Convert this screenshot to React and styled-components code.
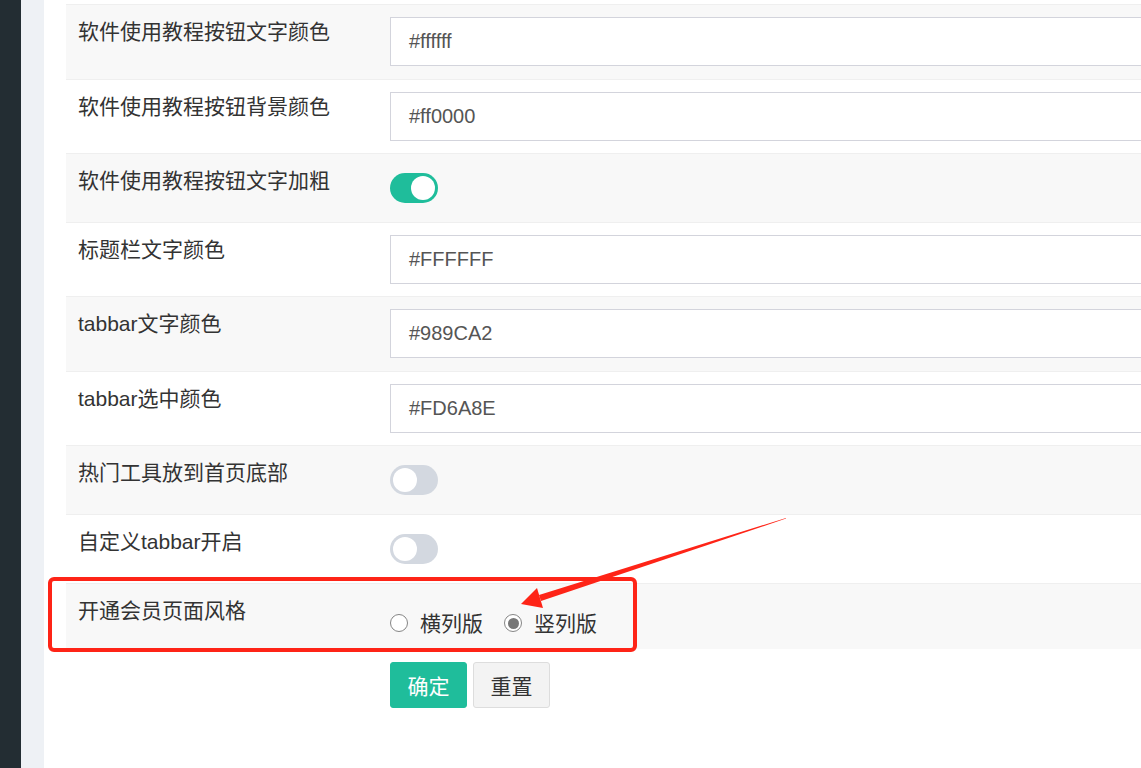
import React from "react";
import styled, { createGlobalStyle } from "styled-components";

const GlobalStyle = createGlobalStyle`
  html, body {
    margin: 0;
    padding: 0;
    overflow: hidden;
    background: #ffffff;
    font-family: "Liberation Sans", "Noto Sans CJK SC", sans-serif;
  }
`;

const Page = styled.div`
  display: flex;
  width: 1141px;
  height: 768px;
  overflow: hidden;
  position: relative;
`;

const Sidebar = styled.div`
  width: 21px;
  flex-shrink: 0;
  background: #232d33;
`;

const Gutter = styled.div`
  width: 23px;
  flex-shrink: 0;
  background: #eef1f5;
`;

const Main = styled.div`
  flex: 1;
  min-width: 0;
  padding: 4px 0 0 22px;
  background: #ffffff;
`;

const Form = styled.div`
  width: 1200px;
`;

// one settings row, striped
const Row = styled.div`
  display: flex;
  align-items: flex-start;
  box-sizing: border-box;
  height: ${(p) => p.$h}px;
  padding: 12px 0 0 12px;
  border-top: 1px solid #efefef;
  background: ${(p) => (p.$odd ? "#f8f8f8" : "#ffffff")};
`;

const Label = styled.div`
  width: 312px;
  flex-shrink: 0;
  font-size: 21px;
  line-height: 30px;
  color: #333333;
`;

const TextInput = styled.div`
  flex: 1;
  box-sizing: border-box;
  height: 49px;
  border: 1px solid #d3d4dc;
  background: #ffffff;
  padding: 0 18px;
  display: flex;
  align-items: center;
  font-size: 20px;
  color: #555555;
`;

const Switch = styled.div`
  position: relative;
  margin-top: 7px;
  width: 48px;
  height: 30px;
  border-radius: 15px;
  background: ${(p) => (p.$on ? "#1fbd9b" : "#d3d8e0")};
  &::after {
    content: "";
    position: absolute;
    top: 3px;
    left: ${(p) => (p.$on ? "21px" : "3px")};
    width: 24px;
    height: 24px;
    border-radius: 50%;
    background: #ffffff;
  }
`;

const RadioGroup = styled.div`
  display: flex;
  align-items: center;
  height: 30px;
  margin-top: 11px;
  font-size: 21px;
  color: #333333;
`;

const RadioItem = styled.label`
  display: flex;
  align-items: center;
  margin-right: 21px;
`;

const RadioDot = styled.span`
  box-sizing: border-box;
  width: 18px;
  height: 18px;
  border-radius: 50%;
  border: 1.5px solid #858585;
  background: #ffffff;
  margin-right: 12px;
  margin-top: 2px;
  display: flex;
  align-items: center;
  justify-content: center;
  &::after {
    content: "";
    width: 11px;
    height: 11px;
    border-radius: 50%;
    background: ${(p) => (p.$checked ? "#777777" : "transparent")};
  }
`;

const ButtonBar = styled.div`
  display: flex;
  gap: 6px;
  margin-top: 13px;
  padding-left: 324px;
`;

const Button = styled.div`
  box-sizing: border-box;
  width: 77px;
  height: 46px;
  border-radius: 3px;
  display: flex;
  align-items: center;
  justify-content: center;
  font-size: 21px;
  color: ${(p) => (p.$primary ? "#ffffff" : "#333333")};
  background: ${(p) => (p.$primary ? "#1fbd9b" : "#f3f3f3")};
  border: 1px solid ${(p) => (p.$primary ? "#1fbd9b" : "#dddddd")};
`;

const Annotation = styled.svg`
  position: absolute;
  top: 0;
  left: 0;
  pointer-events: none;
`;

const rows = [
  { label: "软件使用教程按钮文字颜色", type: "input", value: "#ffffff", h: 75 },
  { label: "软件使用教程按钮背景颜色", type: "input", value: "#ff0000", h: 74 },
  { label: "软件使用教程按钮文字加粗", type: "switch", on: true, h: 69 },
  { label: "标题栏文字颜色", type: "input", value: "#FFFFFF", h: 74 },
  { label: "tabbar文字颜色", type: "input", value: "#989CA2", h: 75 },
  { label: "tabbar选中颜色", type: "input", value: "#FD6A8E", h: 74 },
  { label: "热门工具放到首页底部", type: "switch", on: false, h: 69 },
  { label: "自定义tabbar开启", type: "switch", on: false, h: 69 },
  { label: "开通会员页面风格", type: "radio", h: 66 },
];

export default function App() {
  return (
    <>
      <GlobalStyle />
      <Page>
        <Sidebar />
        <Gutter />
        <Main>
          <Form>
            {rows.map((r, i) => (
              <Row key={r.label} $h={r.h} $odd={i % 2 === 0}>
                <Label>{r.label}</Label>
                {r.type === "input" && <TextInput>{r.value}</TextInput>}
                {r.type === "switch" && <Switch $on={r.on} />}
                {r.type === "radio" && (
                  <RadioGroup>
                    <RadioItem>
                      <RadioDot />
                      横列版
                    </RadioItem>
                    <RadioItem>
                      <RadioDot $checked />
                      竖列版
                    </RadioItem>
                  </RadioGroup>
                )}
              </Row>
            ))}
            <ButtonBar>
              <Button $primary>确定</Button>
              <Button>重置</Button>
            </ButtonBar>
          </Form>
        </Main>
        <Annotation width="1141" height="768" viewBox="0 0 1141 768">
          <rect x="50" y="579" width="585" height="71" rx="4" fill="none" stroke="#fe2417" strokeWidth="4" />
          <polygon points="786,518.6 541,601 539,595 786,518" fill="#fe2417" />
          <polygon points="521,604 537,588 543,608" fill="#fe2417" />
        </Annotation>
      </Page>
    </>
  );
}
